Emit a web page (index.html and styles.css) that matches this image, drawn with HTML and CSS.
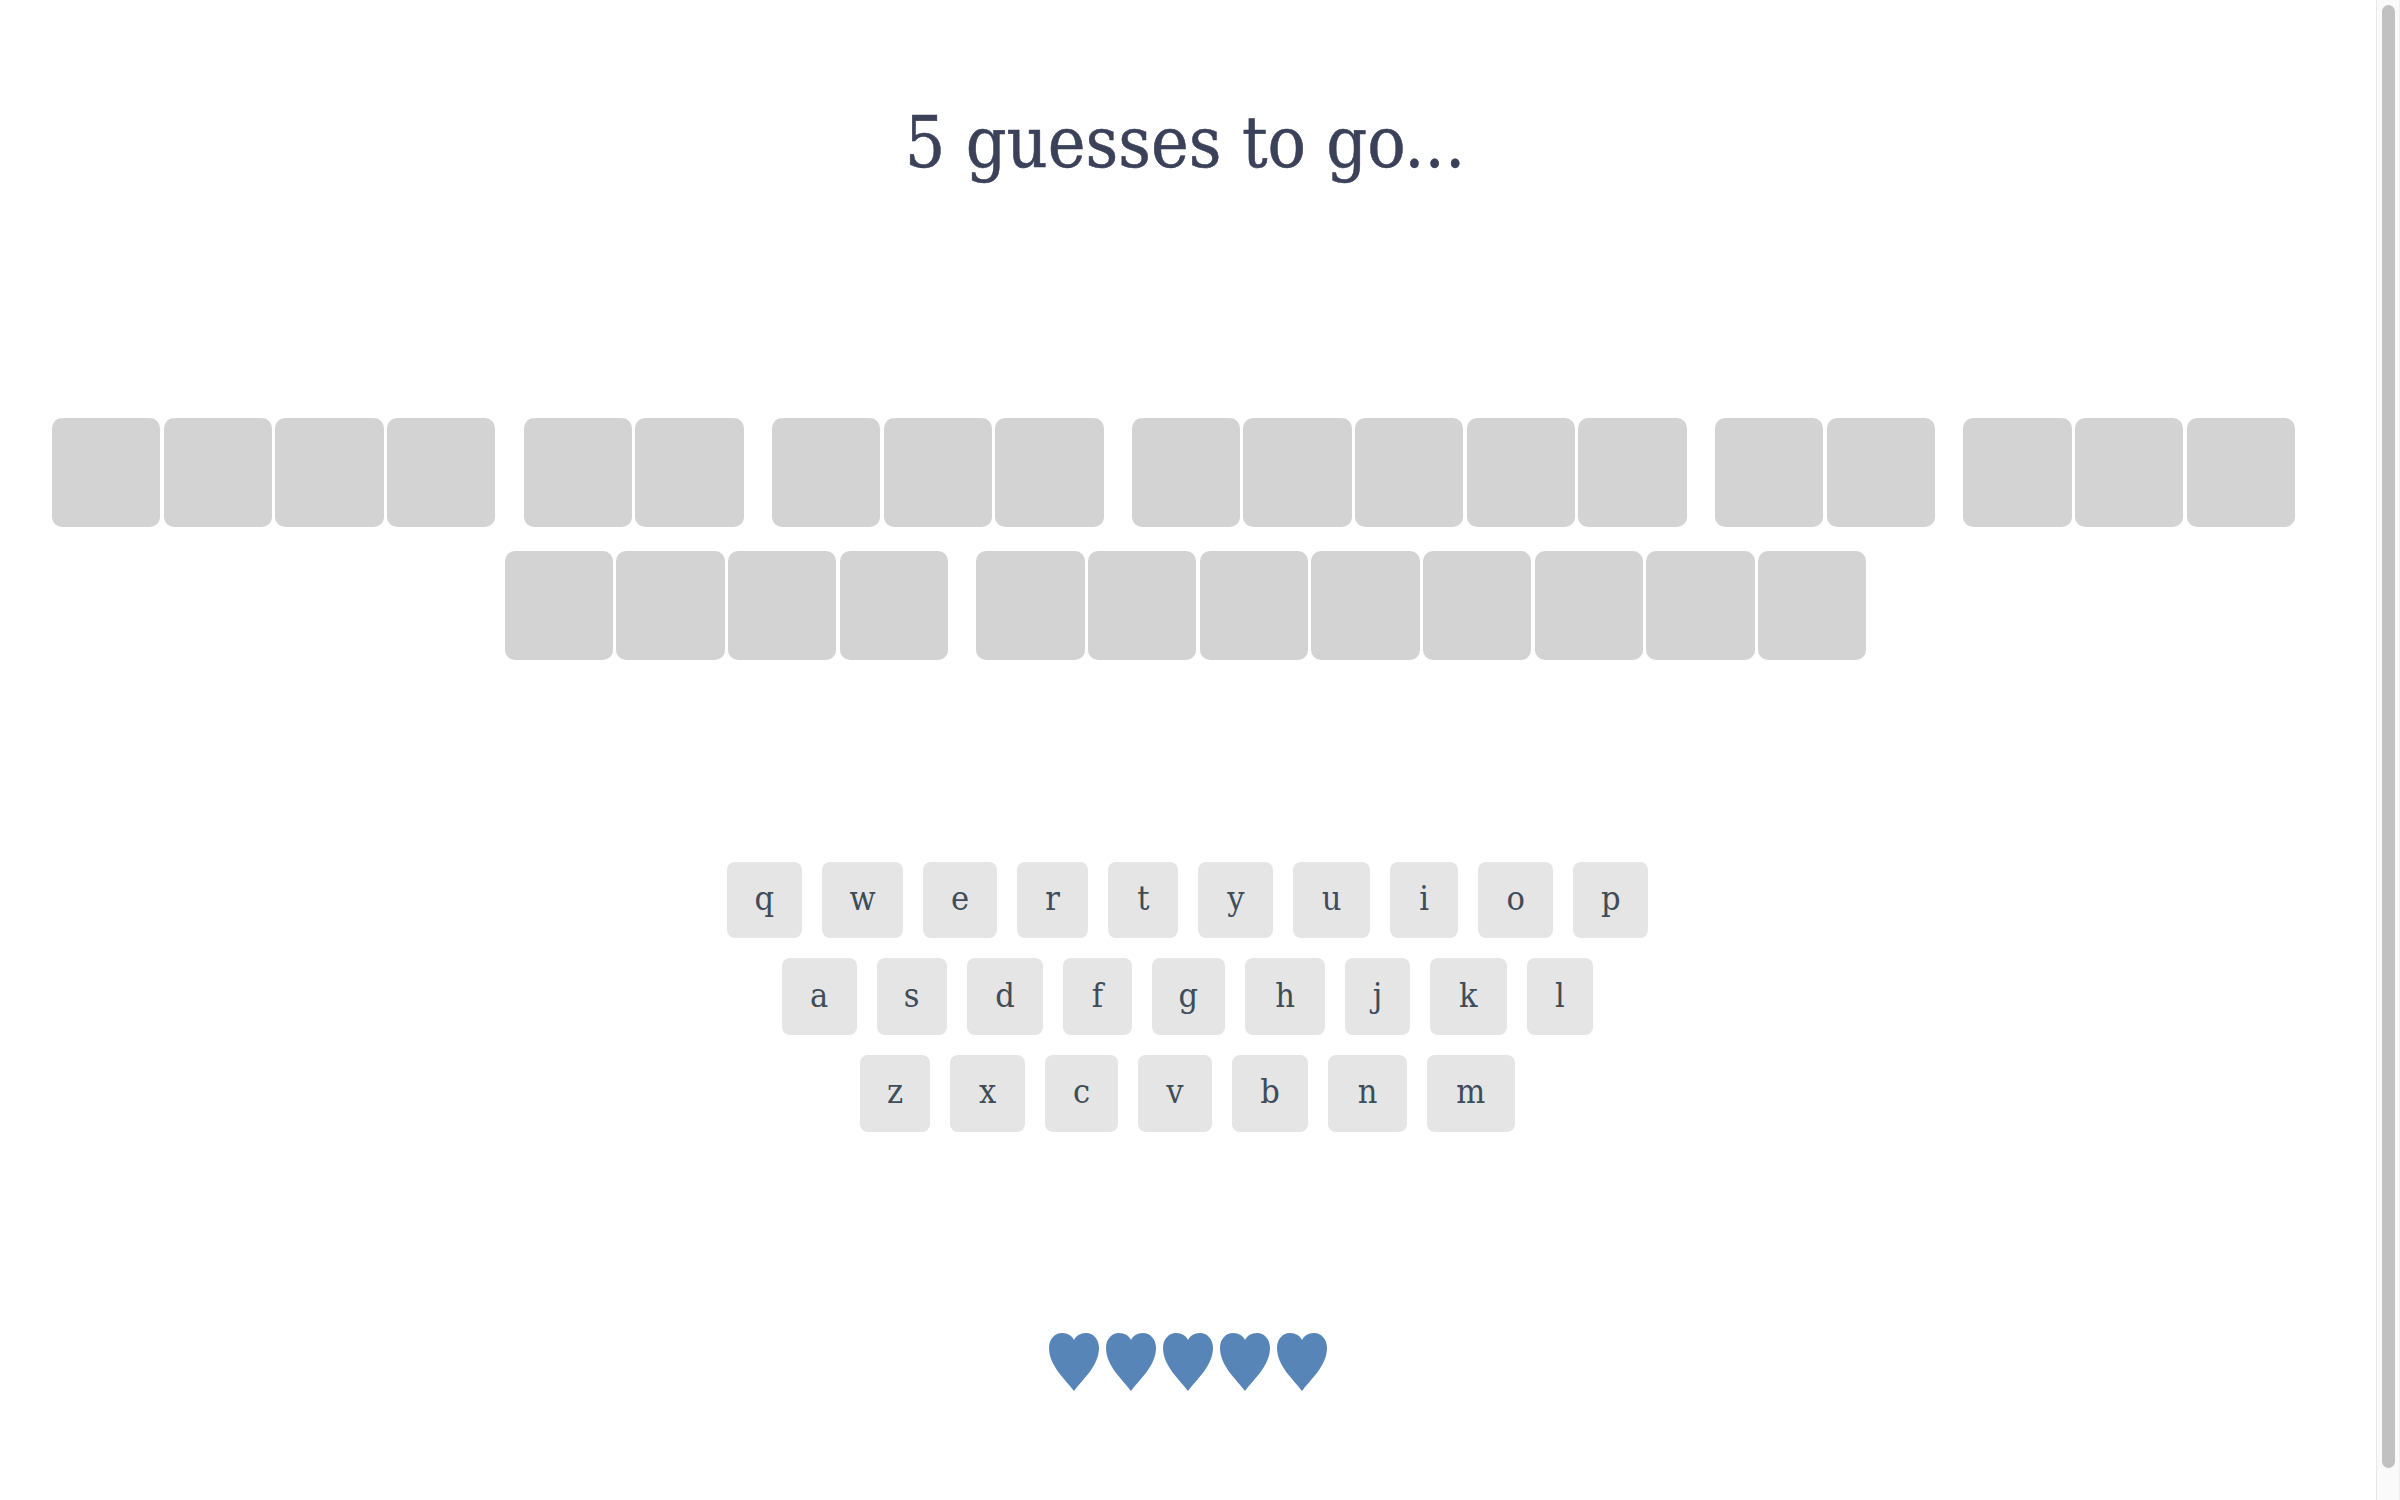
FILE: index.html
```html
<!DOCTYPE html>
<html lang="en">
<head>
<meta charset="utf-8">
<title>Guess the phrase</title>
<link rel="stylesheet" href="styles.css">
</head>
<body>
<main class="game">
  <h1 class="status">5 guesses to go...</h1>
  <section class="board">
    <div class="line line-first">
      <div class="word"><i class="tile"></i><i class="tile"></i><i class="tile"></i><i class="tile"></i></div>
      <div class="word"><i class="tile"></i><i class="tile"></i></div>
      <div class="word"><i class="tile"></i><i class="tile"></i><i class="tile"></i></div>
      <div class="word"><i class="tile"></i><i class="tile"></i><i class="tile"></i><i class="tile"></i><i class="tile"></i></div>
      <div class="word"><i class="tile"></i><i class="tile"></i></div>
      <div class="word"><i class="tile"></i><i class="tile"></i><i class="tile"></i></div>
    </div>
    <div class="line line-second">
      <div class="word"><i class="tile"></i><i class="tile"></i><i class="tile"></i><i class="tile"></i></div>
      <div class="word"><i class="tile"></i><i class="tile"></i><i class="tile"></i><i class="tile"></i><i class="tile"></i><i class="tile"></i><i class="tile"></i><i class="tile"></i></div>
    </div>
  </section>
  <section class="keyboard">
    <div class="key-row">
      <button class="key w75">q</button><button class="key w82">w</button><button class="key w73">e</button><button class="key w72">r</button><button class="key w70">t</button><button class="key w75">y</button><button class="key w77">u</button><button class="key w68">i</button><button class="key w75">o</button><button class="key w75">p</button>
    </div>
    <div class="key-row">
      <button class="key w75">a</button><button class="key w70">s</button><button class="key w77">d</button><button class="key w68">f</button><button class="key w73">g</button><button class="key w80">h</button><button class="key w65">j</button><button class="key w77">k</button><button class="key w67">l</button>
    </div>
    <div class="key-row">
      <button class="key w70">z</button><button class="key w75">x</button><button class="key w73">c</button><button class="key w73">v</button><button class="key w77">b</button><button class="key w78">n</button><button class="key w88">m</button>
    </div>
  </section>
  <section class="lives">
    <svg class="heart" viewBox="0 0 50 58"><path d="M25 58C17 47 0 33 0 15 0 6 6 0 13 0c6 0 10 3 12 7 2-4 6-7 12-7 7 0 13 6 13 15 0 18-17 32-25 43z"/></svg>
    <svg class="heart" viewBox="0 0 50 58"><path d="M25 58C17 47 0 33 0 15 0 6 6 0 13 0c6 0 10 3 12 7 2-4 6-7 12-7 7 0 13 6 13 15 0 18-17 32-25 43z"/></svg>
    <svg class="heart" viewBox="0 0 50 58"><path d="M25 58C17 47 0 33 0 15 0 6 6 0 13 0c6 0 10 3 12 7 2-4 6-7 12-7 7 0 13 6 13 15 0 18-17 32-25 43z"/></svg>
    <svg class="heart" viewBox="0 0 50 58"><path d="M25 58C17 47 0 33 0 15 0 6 6 0 13 0c6 0 10 3 12 7 2-4 6-7 12-7 7 0 13 6 13 15 0 18-17 32-25 43z"/></svg>
    <svg class="heart" viewBox="0 0 50 58"><path d="M25 58C17 47 0 33 0 15 0 6 6 0 13 0c6 0 10 3 12 7 2-4 6-7 12-7 7 0 13 6 13 15 0 18-17 32-25 43z"/></svg>
  </section>
</main>
<aside class="scrollbar"><div class="thumb"></div></aside>
</body>
</html>
```
FILE: styles.css
```css
html, body { margin: 0; height: 100%; overflow: hidden; background: #fff; }
body { display: flex; font-family: "DejaVu Serif Condensed", "DejaVu Serif", serif; }
.game { flex: 1; min-width: 0; display: flex; flex-direction: column; align-items: center; padding-right: 1px; }

.status {
  margin: 0;
  height: 418px;
  padding: 98px 5px 0 0;
  box-sizing: border-box;
  font-size: 71px;
  line-height: 90px;
  font-weight: 400;
  color: #3a4159;
  -webkit-text-stroke: 0.5px #3a4159;
}

.board { display: flex; flex-direction: column; gap: 24.67px; width: 100%; }
.line { display: flex; justify-content: center; gap: 28.33px; }
.line-first { padding-right: 28px; }
.line-second { padding-right: 4px; }
.word { display: flex; gap: 3.33px; }
.tile { display: block; width: 108.33px; height: 108.67px; border-radius: 10px; background: #d3d3d3; }

.keyboard { display: flex; flex-direction: column; gap: 20px; margin-top: 201.67px; }
.key-row { display: flex; justify-content: center; gap: 20px; }
.key {
  height: 76.67px;
  padding: 0 0 4px;
  border: 0;
  border-radius: 8px;
  background: #e5e5e5;
  color: #3f4d58;
  font-family: inherit;
  font-size: 34px;
}
.w65 { width: 65px; } .w67 { width: 66.67px; } .w68 { width: 68.33px; }
.w70 { width: 70px; } .w72 { width: 71.67px; } .w73 { width: 73.33px; }
.w75 { width: 75px; } .w77 { width: 76.67px; } .w78 { width: 78.33px; }
.w80 { width: 80px; } .w82 { width: 81.67px; } .w88 { width: 88.33px; }

.lives { display: flex; gap: 7px; margin-top: 201.33px; }
.heart { display: block; width: 50px; height: 58px; fill: #5885b8; }

.scrollbar {
  flex: none;
  box-sizing: border-box;
  width: 24px;
  height: 100%;
  padding: 5px 4px 32px 5px;
  background: #fafafa;
  border-left: 1px solid #e8e8e8;
  border-right: 1px solid #f0f0f0;
}
.thumb { height: 100%; border-radius: 7px; background: #c1c1c1; }
```
